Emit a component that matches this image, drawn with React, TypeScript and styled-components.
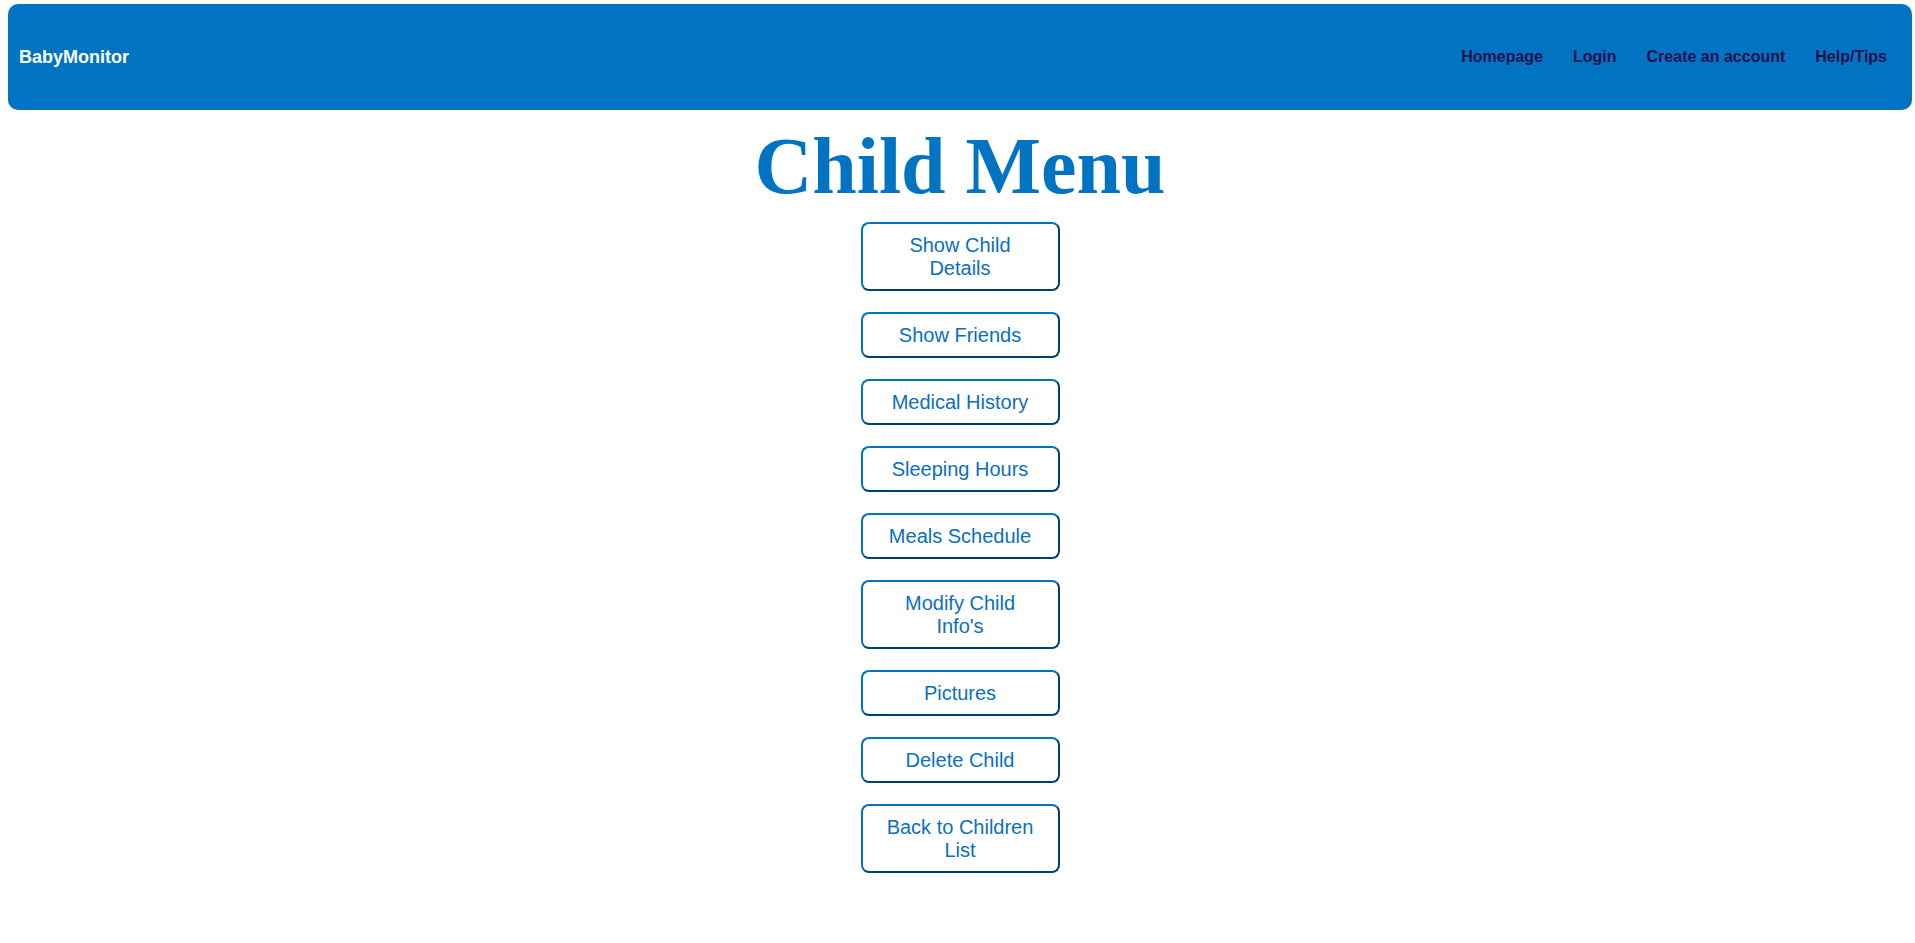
import styled, { createGlobalStyle } from 'styled-components';

const GlobalStyle = createGlobalStyle`
    body {
        margin: 4px 3px 0 8px;
        background: #ffffff;
        font-family: "Liberation Sans", Arial, sans-serif;
    }
`

const StyledHeader = styled.header`
    background-color: #0074c2;
    height: 106px;
    border-radius: 10px;
    padding: 0 10px 0 11px;

    display: flex;
    align-items: center;
    justify-content: space-between;
`

const StyledBrand = styled.span`
    color: #ffffff;
    font-weight: 700;
    font-size: 18px;
`

const StyledNav = styled.nav`
    display: flex;
    align-items: center;
`

const StyledNavLink = styled.a`
    color: #22104e;
    font-weight: 700;
    font-size: 16px;
    padding: 0 15px;
    text-decoration: none;
    cursor: pointer;
`

const StyledMain = styled.main`
    display: flex;
    flex-direction: column;
    align-items: center;
`

const StyledTitle = styled.h1`
    font-family: "Liberation Serif", "Times New Roman", serif;
    font-size: 80px;
    font-weight: 700;
    color: #0074c2;
    margin: 11px 0 10px;
    line-height: normal;
`

const StyledMenu = styled.div`
    display: flex;
    flex-direction: column;
    align-items: center;
    gap: 21px;
`

const StyledMenuButton = styled.button`
    width: 199px;
    padding: 9.5px 20px;
    background-color: #ffffff;
    border: 2px outset #0074c2;
    border-radius: 8px;
    color: #0a6fc0;
    font-family: "Liberation Sans", Arial, sans-serif;
    font-size: 20px;
    line-height: 23px;
    cursor: pointer;
`

const navItems = ['Homepage', 'Login', 'Create an account', 'Help/Tips'];

const menuItems = [
    'Show Child Details',
    'Show Friends',
    'Medical History',
    'Sleeping Hours',
    'Meals Schedule',
    "Modify Child Info's",
    'Pictures',
    'Delete Child',
    'Back to Children List',
];

export default function App() {
    return (
        <>
            <GlobalStyle />
            <StyledHeader>
                <StyledBrand>BabyMonitor</StyledBrand>
                <StyledNav>
                    {navItems.map(item => (
                        <StyledNavLink key={item}>{item}</StyledNavLink>
                    ))}
                </StyledNav>
            </StyledHeader>
            <StyledMain>
                <StyledTitle>Child Menu</StyledTitle>
                <StyledMenu>
                    {menuItems.map(item => (
                        <StyledMenuButton key={item}>{item}</StyledMenuButton>
                    ))}
                </StyledMenu>
            </StyledMain>
        </>
    )
}
